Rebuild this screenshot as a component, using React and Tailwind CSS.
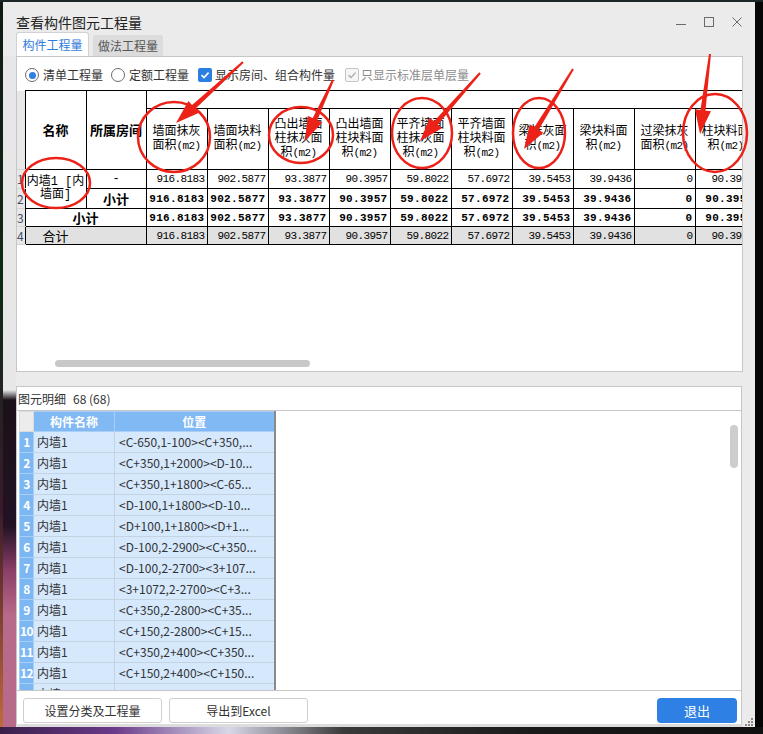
import React from 'react'

const heads = [
  ['墙面抹灰', '面积(m2)'],
  ['墙面块料', '面积(m2)'],
  ['凸出墙面', '柱抹灰面', '积(m2)'],
  ['凸出墙面', '柱块料面', '积(m2)'],
  ['平齐墙面', '柱抹灰面', '积(m2)'],
  ['平齐墙面', '柱块料面', '积(m2)'],
  ['梁抹灰面', '积(m2)'],
  ['梁块料面', '积(m2)'],
  ['过梁抹灰', '面积(m2)'],
  ['柱块料面', '积(m2)'],
]

const vals = ['916.8183', '902.5877', '93.3877', '90.3957', '59.8022', '57.6972', '39.5453', '39.9436', '0', '90.3957']

const places = [
  '<C-650,1-100><C+350,...',
  '<C+350,1+2000><D-10...',
  '<C+350,1+1800><C-65...',
  '<D-100,1+1800><D-10...',
  '<D+100,1+1800><D+1...',
  '<D-100,2-2900><C+350...',
  '<D-100,2-2700><3+107...',
  '<3+1072,2-2700><C+3...',
  '<C+350,2-2800><C+35...',
  '<C+150,2-2800><C+15...',
  '<C+350,2+400><C+350...',
  '<C+150,2+400><C+150...',
  '<C+350,2+600><C+350...',
]

// row-number column of the upper table
const rh = 'p-0 bg-[#e8e8e8] border-0 border-b border-b-[#d4d4d4] text-[12px] text-[#3f4f68] text-left align-middle overflow-hidden font-["Noto_Sans_CJK_SC",sans-serif]'
const cell = 'p-0 border border-black align-middle'

function HeadLine({ text }) {
  const i = text.indexOf('(')
  if (i < 0) return <div>{text}</div>
  return (
    <div>
      {text.slice(0, i)}
      <span className="text-[11px] tracking-[-0.6px]">{text.slice(i)}</span>
    </div>
  )
}

function NumCells({ bold }) {
  return vals.map((v, i) => (
    <td
      key={i}
      className={`${cell} text-right pr-[2px] whitespace-nowrap overflow-hidden ${
        bold ? 'font-bold text-[11px] tracking-[0.3px]' : 'text-[11px] tracking-[-0.6px]'
      }`}
    >
      {v}
    </td>
  ))
}

function Arrow({ t, p }) {
  const dx = p[0] - t[0]
  const dy = p[1] - t[1]
  const len = Math.hypot(dx, dy)
  const ux = dx / len
  const uy = dy / len
  const nx = -uy
  const ny = ux
  const hl = 24
  const hw = 8
  const bx = p[0] - ux * hl
  const by = p[1] - uy * hl
  const shaft = [
    [t[0] + nx * 1, t[1] + ny * 1],
    [bx + ux * 3 + nx * 2.6, by + uy * 3 + ny * 2.6],
    [bx + ux * 3 - nx * 2.6, by + uy * 3 - ny * 2.6],
    [t[0] - nx * 1, t[1] - ny * 1],
  ]
  const head = [p, [bx + nx * hw, by + ny * hw], [bx - nx * hw, by - ny * hw]]
  const pts = (a) => a.map((q) => q.join(',')).join(' ')
  return (
    <g fill="#ec2219">
      <polygon points={pts(shaft)} />
      <polygon points={pts(head)} />
    </g>
  )
}

function Marks() {
  return (
    <svg className="absolute left-0 top-0 pointer-events-none" width="763" height="734">
      <g fill="none" stroke="#ec2219" strokeWidth="2.5">
        <ellipse cx="174" cy="137" rx="36" ry="35" />
        <ellipse cx="301" cy="135" rx="32" ry="28" />
        <ellipse cx="422" cy="133" rx="30" ry="35" />
        <ellipse cx="539" cy="133" rx="26" ry="35" />
        <ellipse cx="715" cy="133" rx="32" ry="39" />
        <ellipse cx="56" cy="183" rx="34" ry="25" />
      </g>
      <Arrow t={[243, 62]} p={[176, 123]} />
      <Arrow t={[333, 80]} p={[305, 141]} />
      <Arrow t={[480, 73]} p={[420, 141]} />
      <Arrow t={[573, 69]} p={[524, 149]} />
      <Arrow t={[710, 54]} p={[700, 134]} />
    </svg>
  )
}

function TopTable() {
  return (
    <table className="table-fixed border-collapse w-[739px] font-['Liberation_Mono','Noto_Sans_CJK_SC',monospace] text-[12px] text-black leading-[14px]">
      <colgroup>
        <col className="w-[8px]" />
        <col className="w-[61px]" />
        <col className="w-[60px]" />
        {heads.map((_, i) => (
          <col key={i} className="w-[61px]" />
        ))}
      </colgroup>
      <tbody>
        <tr className="h-[18px]">
          <td rowSpan={2} className={rh} />
          <th rowSpan={2} className={`${cell} text-[13px] font-bold font-['Noto_Sans_CJK_SC',sans-serif]`}>名称</th>
          <th rowSpan={2} className={`${cell} text-[13px] font-bold font-['Noto_Sans_CJK_SC',sans-serif] whitespace-nowrap overflow-hidden`}>所属房间</th>
          <td colSpan={10} className={cell} />
        </tr>
        <tr className="h-[61px]">
          {heads.map((h, i) => (
            <td key={i} className={`${cell} text-center px-[2px] overflow-hidden whitespace-nowrap`}>
              {h.map((l, j) => (
                <HeadLine key={j} text={l} />
              ))}
            </td>
          ))}
        </tr>
        <tr className="h-[19px]">
          <td className={rh}>1</td>
          <td rowSpan={2} className={`${cell} text-center whitespace-nowrap overflow-hidden leading-[13px]`}>
            <div>内墙1 [内</div>
            <div>墙面]</div>
          </td>
          <td className={`${cell} text-center`}>-</td>
          <NumCells />
        </tr>
        <tr className="h-[20px]">
          <td className={rh}>2</td>
          <td className={`${cell} text-center font-bold text-[13px] font-['Noto_Sans_CJK_SC',sans-serif]`}>小计</td>
          <NumCells bold />
        </tr>
        <tr className="h-[18px]">
          <td className={rh}>3</td>
          <td colSpan={2} className={`${cell} text-center font-bold text-[13px] font-['Noto_Sans_CJK_SC',sans-serif]`}>小计</td>
          <NumCells bold />
        </tr>
        <tr className="h-[18px] bg-[#e1e1e1]">
          <td className={rh}>4</td>
          <td colSpan={2} className={`${cell} text-left pl-[17px] text-[13px] font-['Noto_Sans_CJK_SC',sans-serif]`}>合计</td>
          <NumCells />
        </tr>
      </tbody>
    </table>
  )
}

function DetailGrid() {
  const b = 'p-0 border border-[#c4d3e2]'
  return (
    <table className="table-fixed border-collapse w-[256px] text-[12px]">
      <colgroup>
        <col className="w-[14px]" />
        <col className="w-[81px]" />
        <col className="w-[160px]" />
      </colgroup>
      <tbody>
        <tr className="h-[20px]">
          <td className="p-0 bg-[#ececec] border border-[#dcdcdc]" />
          <td className="p-0 bg-[#80b9f3] border border-[#a9cff6] text-white font-bold text-center">构件名称</td>
          <td className="p-0 bg-[#80b9f3] border border-[#a9cff6] border-r-2 border-r-[#8a8a8a] text-white font-bold text-center">位置</td>
        </tr>
        {places.map((p, i) => (
          <tr key={i} className="h-[21px]">
            <td className="p-0 bg-[#7cb7f3] border border-[#a9cff6] text-white font-bold text-center whitespace-nowrap overflow-visible text-[12px] tracking-[-0.5px]">
              {i + 1}
            </td>
            <td className={`${b} bg-[#d5e8fc] pl-[3px] text-[#333]`}>内墙1</td>
            <td className={`${b} bg-[#d5e8fc] pl-[4px] text-[#333] whitespace-nowrap overflow-hidden border-r-2 border-r-[#8a8a8a]`}>
              {p}
            </td>
          </tr>
        ))}
      </tbody>
    </table>
  )
}

function Window() {
  return (
    <div className="w-[752px] flex flex-col bg-[#ebebeb]">
      <div className="h-[30px] flex items-center pt-[10px] pl-[13px] pr-[13px]">
        <span className="flex-1 text-[14px] text-[#222]">查看构件图元工程量</span>
        <svg width="10" height="10" className="text-[#6a6a6a]">
          <line x1="0" y1="7.5" x2="10" y2="7.5" stroke="currentColor" strokeWidth="1" />
        </svg>
        <svg width="10" height="10" className="ml-[18px] text-[#6a6a6a]">
          <rect x="0.5" y="0.5" width="9" height="9" fill="none" stroke="currentColor" strokeWidth="1" />
        </svg>
        <svg width="10" height="10" className="ml-[18px] text-[#6a6a6a]">
          <path d="M0.5 0.5 L9.5 9.5 M9.5 0.5 L0.5 9.5" stroke="currentColor" strokeWidth="1" />
        </svg>
      </div>
      <div className="h-[24px] flex items-end pl-[13px]">
        <div className="w-[73px] h-[24px] bg-white border border-b-0 border-[#d2d2d2] rounded-t-[3px] flex items-center justify-center text-[12px] text-[#2f7bdc]">
          构件工程量
        </div>
        <div className="ml-[4px] w-[70px] h-[21px] bg-[#dcdcdc] rounded-t-[2px] flex items-center justify-center text-[12px] text-[#555]">
          做法工程量
        </div>
      </div>
      <div className="flex-1 flex">
        <div className="w-[13px] bg-[linear-gradient(to_bottom,#e7e7e7_0px,#e7e7e7_334px,#1b1119_344px,#221224_470px,#8c4068_515px,#b86a8a_560px,#b86a8a_100%)]" />
        <div className="w-[727px] flex flex-col">
          <div className="h-[316px] bg-white border border-[#c6c6c6] flex flex-col">
            <div className="h-[33px] pt-[3px] pl-[8px] flex items-center text-[12px] text-[#333]">
              <span className="w-[14px] h-[14px] rounded-full border border-[#6b6b6b] bg-white flex items-center justify-center">
                <span className="w-[7px] h-[7px] rounded-full bg-[#2f80e0]" />
              </span>
              <span className="ml-[4px]">清单工程量</span>
              <span className="ml-[8px] w-[14px] h-[14px] rounded-full border border-[#6b6b6b] bg-white" />
              <span className="ml-[4px]">定额工程量</span>
              <span className="ml-[9px] w-[14px] h-[14px] rounded-[2px] bg-[#2a7fdf] flex items-center justify-center">
                <svg width="10" height="10" viewBox="0 0 10 10">
                  <path d="M1.5 5.2 L4 7.6 L8.6 2.6" fill="none" stroke="white" strokeWidth="1.6" />
                </svg>
              </span>
              <span className="ml-[3px]">显示房间、组合构件量</span>
              <span className="ml-[10px] w-[14px] h-[14px] rounded-[2px] border border-[#c4c4c4] bg-[#f6f6f6] flex items-center justify-center">
                <svg width="10" height="10" viewBox="0 0 10 10">
                  <path d="M1.5 5.2 L4 7.6 L8.6 2.6" fill="none" stroke="#a8a8a8" strokeWidth="1.4" />
                </svg>
              </span>
              <span className="ml-[2px] text-[#8c8c8c]">只显示标准层单层量</span>
            </div>
            <div className="h-[267px] overflow-hidden">
              <TopTable />
            </div>
            <div className="h-[14px] pt-[3px] pl-[38px]">
              <div className="w-[255px] h-[7px] rounded-full bg-[#c8c8c8]" />
            </div>
          </div>
          <div className="h-[14px]" />
          <div className="h-[338px] mr-[1px] bg-white border border-b-0 border-[#c6c6c6] flex flex-col">
            <div className="h-[23px] flex items-center pl-[1px] text-[12px] text-[#333]">
              图元明细<span className="ml-[7px]">68 (68)</span>
            </div>
            <div className="h-[281px] border-t border-b border-[#c6c6c6] flex">
              <div className="pl-[2px] h-[279px] overflow-hidden">
                <DetailGrid />
              </div>
              <div className="flex-1" />
              <div className="w-[8px] h-[43px] mt-[14px] mr-[3px] rounded-full bg-[#cdcdcd]" />
            </div>
            <div className="flex-1 flex items-start pt-[7px] pl-[6px] pr-[4px] text-[12px]">
              <button className="w-[139px] h-[25px] bg-white border border-[#cfcfcf] rounded-[3px] text-[#333]">
                设置分类及工程量
              </button>
              <button className="ml-[7px] w-[139px] h-[25px] bg-white border border-[#cfcfcf] rounded-[3px] text-[#333]">
                导出到Excel
              </button>
              <button className="ml-auto w-[80px] h-[25px] bg-[#2e80e4] rounded-[4px] text-white text-[13px]">
                退出
              </button>
            </div>
          </div>
          <div className="h-[3px] bg-[#dcdcdc]" />
        </div>
        <div className="w-[12px] flex flex-col justify-end items-end pr-[2px] pb-[1px]">
          <svg width="8" height="8">
            <rect x="6" y="0" width="2" height="2" fill="#8a8a8a" />
            <rect x="3" y="3" width="2" height="2" fill="#8a8a8a" />
            <rect x="6" y="3" width="2" height="2" fill="#8a8a8a" />
            <rect x="0" y="6" width="2" height="2" fill="#8a8a8a" />
            <rect x="3" y="6" width="2" height="2" fill="#8a8a8a" />
            <rect x="6" y="6" width="2" height="2" fill="#8a8a8a" />
          </svg>
        </div>
      </div>
    </div>
  )
}

export default function App() {
  return (
    <div className="relative w-[763px] h-[734px] overflow-hidden bg-[#121212] flex flex-col font-['Noto_Sans_CJK_SC',sans-serif]">
      <div className="h-[2px] bg-[#1b2626]" />
      <div className="flex h-[725px]">
        <div className="w-[3px] bg-[linear-gradient(to_bottom,#101a12,#0e2a18_40%,#3a1a2a_70%,#c06a3a)]" />
        <Window />
        <div className="w-[8px] bg-[#060606]" />
      </div>
      <div className="h-[7px] bg-[linear-gradient(to_right,#3a1f4a,#6a3a8a_15%,#d8d8e8_30%,#3a3a3a_45%,#1a1a1a_70%,#101010)]" />
      <Marks />
    </div>
  )
}
